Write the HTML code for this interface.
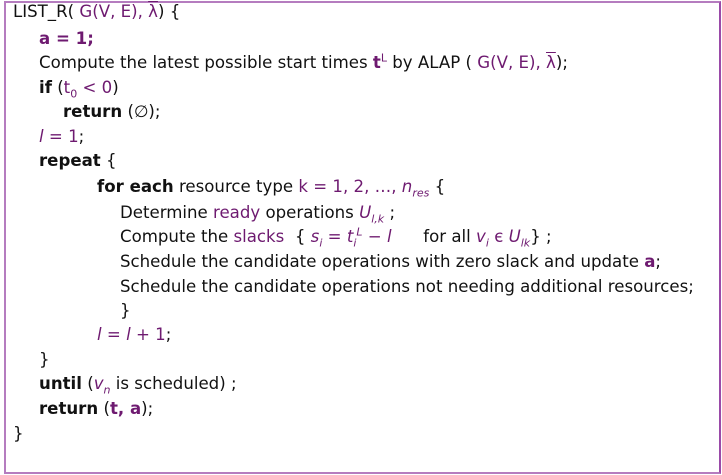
<!DOCTYPE html>
<html><head><meta charset="utf-8"><style>
html,body{margin:0;padding:0;background:#fff;width:722px;height:475px;overflow:hidden}
body{font-family:"DejaVu Sans","Liberation Sans",sans-serif;font-size:16.6px;color:#111}
.box{position:absolute;left:4px;top:1px;width:713px;height:469px;border:2px solid #b57cbf;border-right-color:#9a4aa8}
.l{position:absolute;white-space:pre;line-height:20px}
.p{color:#6e1a70}
b{font-weight:bold}
i{font-style:italic}
sub,sup{font-size:11px;line-height:0}
.ov{text-decoration:overline}
</style></head><body>
<div class="box"></div>
<div class="l" style="left:13px;top:2px">LIST_R( <span class="p">G(V, E), <span class="ov">λ</span></span>) {</div>
<div class="l" style="left:39px;top:29px"><b class="p">a = 1;</b></div>
<div class="l" style="left:39px;top:53px">Compute the latest possible start times <b class="p">t</b><sup class="p">L</sup> by ALAP ( <span class="p">G(V, E), <span class="ov">λ</span></span>);</div>
<div class="l" style="left:39px;top:78px"><b>if</b> (<span class="p">t<sub>0</sub> &lt; 0</span>)</div>
<div class="l" style="left:63px;top:102px"><b>return</b> (∅);</div>
<div class="l" style="left:39px;top:127px"><span class="p"><i>l</i> = 1</span>;</div>
<div class="l" style="left:39px;top:151px"><b>repeat</b> {</div>
<div class="l" style="left:97px;top:177px"><b>for each</b> resource type <span class="p">k = 1, 2, …, <i>n<sub>res</sub></i></span> {</div>
<div class="l" style="left:120px;top:203px">Determine <span class="p">ready</span> operations <i class="p">U<sub>l,k</sub></i> ;</div>
<div class="l" style="left:120px;top:227px">Compute the <span class="p">slacks</span>  { <i class="p">s<sub>i</sub> = t<sub>i</sub><sup>L</sup> − l</i>      for all <i class="p">v<sub>i</sub></i> <span class="p">є</span> <i class="p">U<sub>lk</sub></i>} ;</div>
<div class="l" style="left:120px;top:252px">Schedule the candidate operations with zero slack and update <b class="p">a</b>;</div>
<div class="l" style="left:120px;top:277px">Schedule the candidate operations not needing additional resources;</div>
<div class="l" style="left:120px;top:301px">}</div>
<div class="l" style="left:97px;top:325px"><span class="p"><i>l</i> = <i>l</i> + 1</span>;</div>
<div class="l" style="left:39px;top:350px">}</div>
<div class="l" style="left:39px;top:374px"><b>until</b> (<i class="p">v<sub>n</sub></i> is scheduled) ;</div>
<div class="l" style="left:39px;top:399px"><b>return</b> (<b class="p">t, a</b>);</div>
<div class="l" style="left:13px;top:424px">}</div>
</body></html>
